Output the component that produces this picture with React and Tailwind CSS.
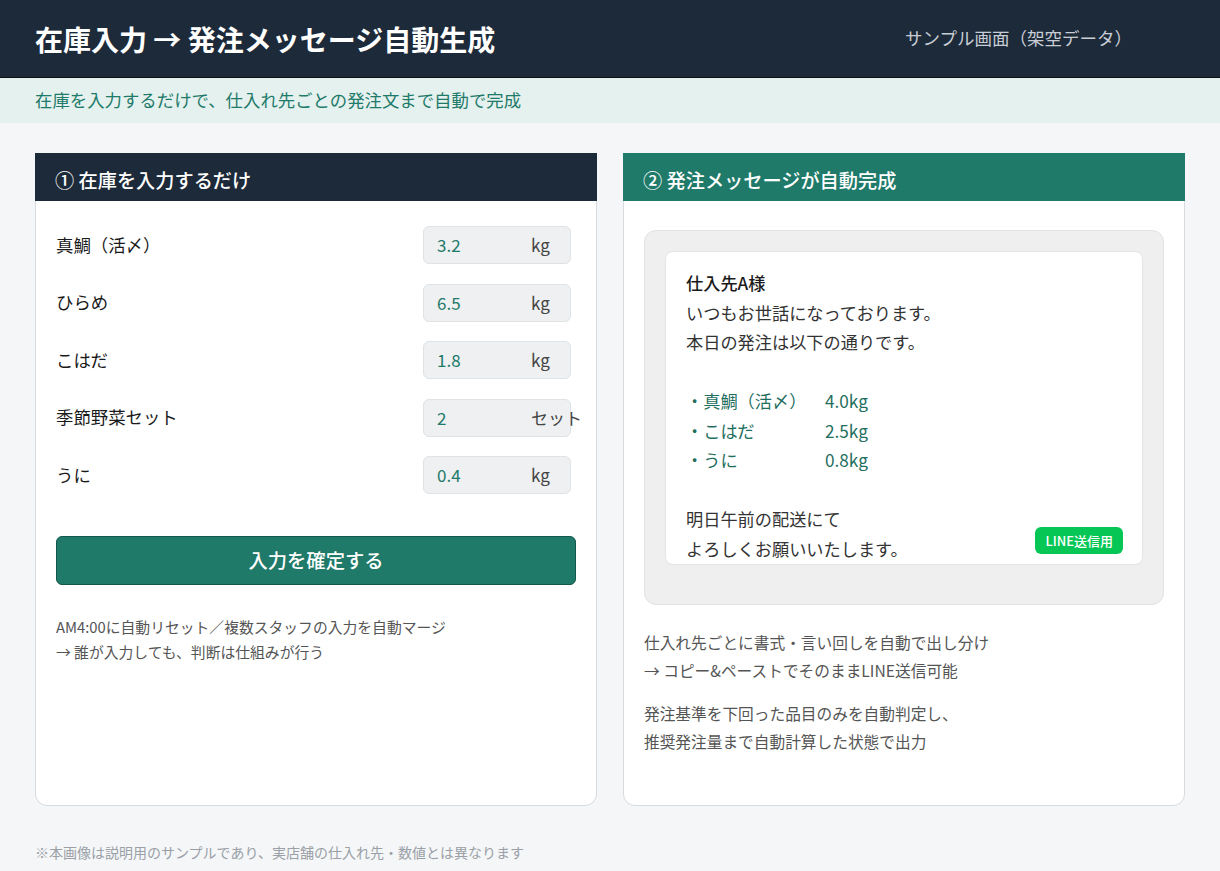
const items = [
  { name: '真鯛（活〆）', value: '3.2', unit: 'kg' },
  { name: 'ひらめ', value: '6.5', unit: 'kg' },
  { name: 'こはだ', value: '1.8', unit: 'kg' },
  { name: '季節野菜セット', value: '2', unit: 'セット' },
  { name: 'うに', value: '0.4', unit: 'kg' },
];

const orders = [
  { name: '・真鯛（活〆）', qty: '4.0kg' },
  { name: '・こはだ', qty: '2.5kg' },
  { name: '・うに', qty: '0.8kg' },
];

const App = () => {
  return (
    <div
      className="min-h-screen bg-[#f4f6f8] text-[#1a1a1a]"
      style={{ fontFamily: '"Noto Sans CJK JP", "Noto Sans", sans-serif' }}
    >
      {/* top bar */}
      <header className="h-[78px] bg-[#1d2a3a] flex items-center justify-between pl-[35px] pr-[88px] border-b border-[#111]">
        <h1 className="text-[28px] font-bold text-white">在庫入力 → 発注メッセージ自動生成</h1>
        <span className="text-[17.5px] text-[#c9ced6]">サンプル画面（架空データ）</span>
      </header>
      <div className="h-[45px] bg-[#e4f1ee] flex items-center px-[35px] text-[17.4px] text-[#1f7a6a]">
        在庫を入力するだけで、仕入れ先ごとの発注文まで自動で完成
      </div>

      <main className="grid grid-cols-2 gap-[26px] px-[35px] pt-[30px]">
        {/* left card */}
        <section className="h-[653px] bg-white border border-[#d6dbe0] rounded-b-xl">
          <div className="h-[48px] bg-[#1d2a3a] flex items-center px-[20px] pt-[6px] text-[19.2px] font-medium text-white -mx-px -mt-px">
            ① 在庫を入力するだけ
          </div>
          <div className="px-[20px] pt-[25px]">
            <div className="flex flex-col gap-[19.5px]">
              {items.map((it) => (
                <div key={it.name} className="flex items-center justify-between pr-[5px]">
                  <span className="text-[17.4px]">{it.name}</span>
                  <div className="w-[148px] h-[38px] bg-[#eef0f1] border border-[#dfe3e6] rounded-md flex items-center pl-[13px] text-[17px]">
                    <span className="w-[94px] shrink-0 text-[#1f7a6a]">{it.value}</span>
                    <span className="whitespace-nowrap shrink-0 text-[#444]">{it.unit}</span>
                  </div>
                </div>
              ))}
            </div>
            <button className="mt-[42px] w-full h-[49px] bg-[#1f7a6a] border border-[#14574b] rounded-md text-white text-[19.3px] font-medium">
              入力を確定する
            </button>
            <p className="mt-[29px] text-[14.8px] leading-[25px] text-[#555]">
              AM4:00に自動リセット／複数スタッフの入力を自動マージ
              <br />→ 誰が入力しても、判断は仕組みが行う
            </p>
          </div>
        </section>

        {/* right card */}
        <section className="h-[653px] bg-white border border-[#d6dbe0] rounded-b-xl">
          <div className="h-[48px] bg-[#1f7a6a] flex items-center px-[20px] pt-[6px] text-[19.2px] font-medium text-white -mx-px -mt-px">
            ② 発注メッセージが自動完成
          </div>
          <div className="px-[20px] pt-[29px]">
            <div className="h-[375px] bg-[#efefef] border border-[#e2e2e2] rounded-xl p-[20px]">
              <div className="relative h-[314px] bg-white border border-[#e4e4e4] rounded-lg px-[20px] pt-[16px] text-[17.2px] leading-[29.5px] text-[#333]">
                <div className="font-medium text-[#1a1a1a]">仕入先A様</div>
                <div>いつもお世話になっております。</div>
                <div>本日の発注は以下の通りです。</div>
                <div className="h-[29.5px]" />
                {orders.map((o) => (
                  <div key={o.name} className="flex text-[#1f6e60]">
                    <span className="w-[139px]">{o.name}</span>
                    <span>{o.qty}</span>
                  </div>
                ))}
                <div className="h-[29.5px]" />
                <div>明日午前の配送にて</div>
                <div>よろしくお願いいたします。</div>
                <span className="absolute right-[19px] bottom-[10px] h-[27px] px-[10px] flex items-center rounded-md bg-[#06c755] text-white text-[13px] font-medium leading-none">
                  LINE送信用
                </span>
              </div>
            </div>
            <div className="mt-[24px] text-[15.7px] leading-[28px] text-[#555]">
              <p>
                仕入れ先ごとに書式・言い回しを自動で出し分け
                <br />→ コピー&ペーストでそのままLINE送信可能
              </p>
              <p className="mt-[15px]">
                発注基準を下回った品目のみを自動判定し、
                <br />推奨発注量まで自動計算した状態で出力
              </p>
            </div>
          </div>
        </section>
      </main>

      <footer className="px-[35px] pt-[36px] pb-[10px] text-[14px] text-[#9aa0a6]">
        ※本画像は説明用のサンプルであり、実店舗の仕入れ先・数値とは異なります
      </footer>
    </div>
  );
};

export default App;
